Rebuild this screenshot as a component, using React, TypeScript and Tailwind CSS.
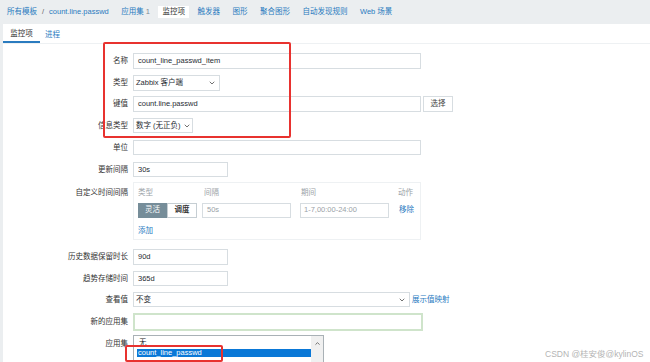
import { ChevronDown, ChevronUp } from "lucide-react";

const navItems = ["触发器", "图形", "聚合图形", "自动发现规则", "Web 场景"];

function Row({ label, children, className = "" }: { label: string; children: React.ReactNode; className?: string }) {
  return (
    <div className={`flex items-center ${className}`}>
      <div className="w-[125px] shrink-0 text-right text-[#333]">{label}</div>
      <div className="ml-[5px] flex h-full items-center">{children}</div>
    </div>
  );
}

function Input({ value, w, className = "" }: { value?: string; w: string; className?: string }) {
  return (
    <div className={`flex h-full items-center border border-[#d7dde1] bg-white pl-[4px] text-[#1f2c33] ${w} ${className}`}>
      {value}
    </div>
  );
}

function Select({ value, w }: { value: string; w: string }) {
  return (
    <div className={`flex h-full items-center justify-between gap-[2px] border border-[#d7dde1] bg-white pl-[2px] pr-[3px] text-[#1f2c33] ${w}`}>
      <span className="whitespace-nowrap">{value}</span>
      <ChevronDown size={8} strokeWidth={2.5} className="shrink-0 text-[#555]" />
    </div>
  );
}

export default function App() {
  return (
    <div className="relative h-[362px] w-[650px] overflow-hidden whitespace-nowrap bg-white font-['Liberation_Sans','Noto_Sans_CJK_SC',sans-serif] text-[7.5px] leading-none">
      {/* breadcrumb + nav */}
      <div className="flex h-[24px] items-center gap-[12.5px] bg-[#ebeef0] pl-[7px] text-[#2a7bbf]">
        <div className="flex items-center gap-[5px]">
          <span>所有模板</span>
          <span className="text-[#666]">/</span>
          <span>count.line.passwd</span>
        </div>
        <span>
          应用集 <span className="text-[#7a8a96]">1</span>
        </span>
        <span className="-mx-[4px] bg-white px-[4px] py-[2px] text-[#333]">监控项</span>
        {navItems.map((n) => (
          <span key={n}>{n}</span>
        ))}
      </div>

      <div className="h-[338px] border-l-[3px] border-[#ebeef0]">
        {/* tabs */}
        <div className="flex h-[20px] items-stretch border-b border-[#eef1f3]">
          <div className="flex w-[37px] items-center justify-center border-b-2 border-[#2a7bbf] pt-[2px] text-[#333]">
            监控项
          </div>
          <div className="ml-[5px] flex items-center pt-[2px] text-[#2a7bbf]">进程</div>
        </div>

        {/* form */}
        <div className="flex flex-col pt-[9px]">
          <Row label="名称" className="h-[16px]">
            <Input value="count_line_passwd_item" w="w-[288px]" />
          </Row>
          <Row label="类型" className="mt-[6px] h-[16px]">
            <Select value="Zabbix 客户端" w="w-[87px]" />
          </Row>
          <Row label="键值" className="mt-[5px] h-[16px]">
            <Input value="count.line.passwd" w="w-[288px]" />
            <div className="ml-[2px] flex h-full w-[30px] items-center justify-center border border-[#d7dde1] bg-white text-[#444]">
              选择
            </div>
          </Row>
          <Row label="信息类型" className="mt-[6px] h-[15px]">
            <Select value="数字 (无正负)" w="w-[60px]" />
          </Row>
          <Row label="单位" className="mt-[7px] h-[15px]">
            <Input w="w-[288px]" />
          </Row>
          <Row label="更新间隔" className="mt-[7px] h-[15px]">
            <Input value="30s" w="w-[95px]" />
          </Row>

          {/* custom intervals */}
          <div className="mt-[5px] flex">
            <div className="w-[125px] shrink-0 pt-[7px] text-right text-[#333]">自定义时间间隔</div>
            <div className="ml-[5px] flex h-[58px] w-[288px] flex-col border border-[#eef1f3] pl-[4px] pt-[6px]">
              <div className="flex text-[#9aa2a7]">
                <span className="w-[64px]">类型</span>
                <span className="w-[98px] pl-[2px]">间隔</span>
                <span className="w-[98px] pl-[1px]">期间</span>
                <span>动作</span>
              </div>
              <div className="mt-[6px] flex h-[15px] items-center">
                <div className="flex h-full w-[64px]">
                  <div className="flex w-[29px] items-center justify-center bg-[#768d99] text-white">灵活</div>
                  <div className="flex w-[30px] items-center justify-center border border-[#c6ced3] bg-white font-bold text-[#333]">
                    调度
                  </div>
                </div>
                <div className="h-full w-[98px]">
                  <div className="flex h-full w-[89px] items-center border border-[#d7dde1] pl-[4px] text-[#9aa2a7]">50s</div>
                </div>
                <div className="h-full w-[98px]">
                  <div className="flex h-full w-[89px] items-center border border-[#d7dde1] pl-[3px] text-[#9aa2a7]">
                    1-7,00:00-24:00
                  </div>
                </div>
                <span className="pl-[1px] text-[#2a7bbf]">移除</span>
              </div>
              <span className="mt-[9px] text-[#2a7bbf]">添加</span>
            </div>
          </div>

          <Row label="历史数据保留时长" className="mt-[9px] h-[16px]">
            <Input value="90d" w="w-[95px]" />
          </Row>
          <Row label="趋势存储时间" className="mt-[6px] h-[15px]">
            <Input value="365d" w="w-[95px]" />
          </Row>
          <Row label="查看值" className="mt-[6px] h-[15px]">
            <Select value="不变" w="w-[277px]" />
            <span className="ml-[2px] text-[#2a7bbf]">展示值映射</span>
          </Row>
          <Row label="新的应用集" className="mt-[6px] h-[18px]">
            <div className="h-full w-[290px] border-[2.5px] border-[#cfe4cb] bg-white" />
          </Row>

          {/* applications list */}
          <div className="mt-[4px] flex">
            <div className="w-[125px] shrink-0 pt-[5px] text-right text-[#333]">应用集</div>
            <div className="ml-[5px] flex h-[40px] w-[191px] border border-[#a9b1b6] bg-white">
              <div className="flex flex-1 flex-col pl-[3px] pt-[3px]">
                <span className="pl-[2px] text-[#222]">无</span>
                <div className="mt-[2px] flex h-[8px] items-center bg-[#0a78d7] pl-[1px] text-white">count_line_passwd</div>
              </div>
              <div className="flex w-[12px] justify-center bg-[#f0f0f0] pt-[4px]">
                <ChevronUp size={7} strokeWidth={3} className="text-[#606060]" />
              </div>
            </div>
          </div>
        </div>
      </div>

      {/* annotation boxes */}
      <div className="absolute left-[103px] top-[42px] h-[96px] w-[188px] rounded-[2px] border-2 border-[#e8322f]" />
      <div className="absolute left-[125px] top-[345px] h-[17px] w-[98px] rounded-[2px] border-2 border-[#e8322f]" />

      {/* watermark */}
      <div className="absolute left-[545px] top-[350px] text-[8.5px] text-[#b4b4b4]">CSDN @桂安俊@kylinOS</div>
    </div>
  );
}
